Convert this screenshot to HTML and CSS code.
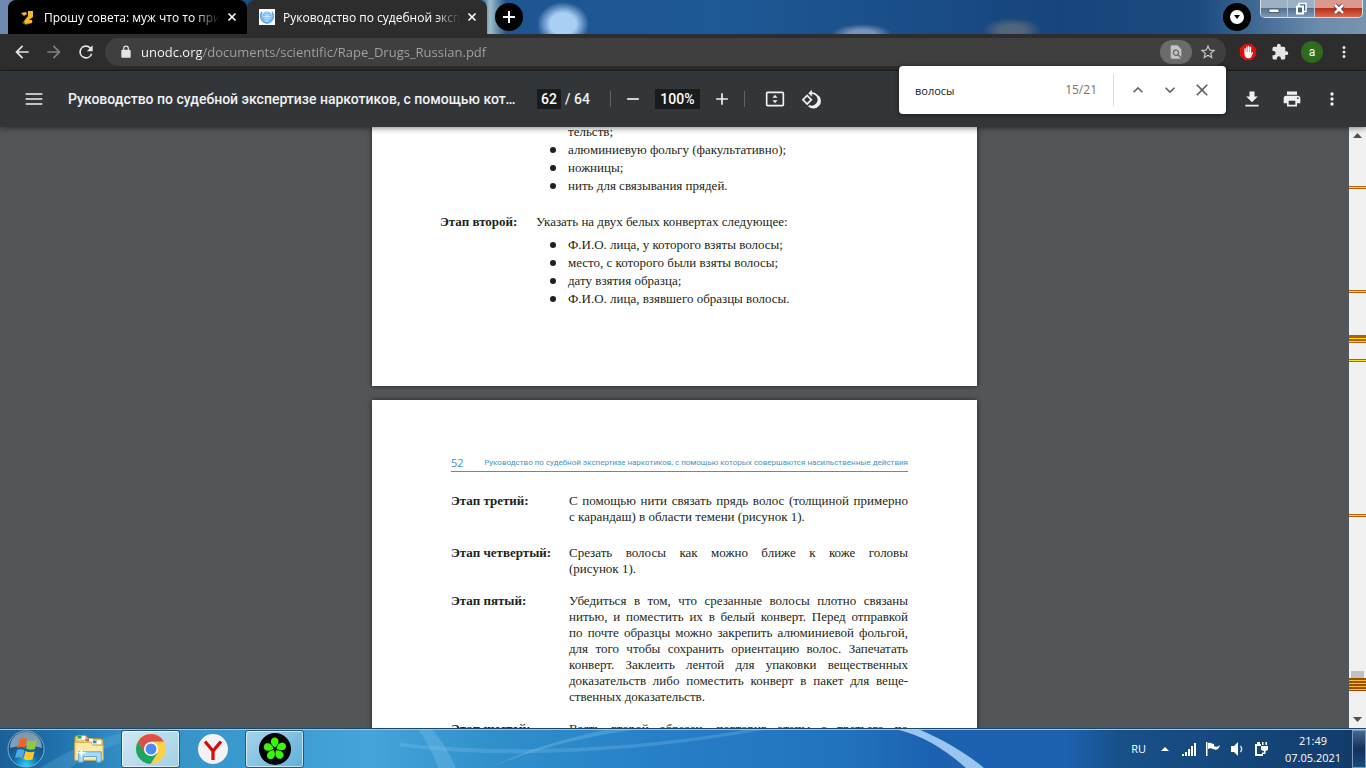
FILE: index.html
```html
<!DOCTYPE html>
<html lang="ru">
<head>
  <meta charset="UTF-8">
  <meta name="viewport" content="width=device-width, initial-scale=1.0">
  <title>Руководство по судебной экспертизе наркотиков</title>
  <link rel="stylesheet" href="styles.css">
</head>
<body>
  <header class="browser">
    <div class="tabstrip">
      <div class="tab">
        <svg class="favicon" viewBox="0 0 16 16"><path d="M3 12l3 2 7-2-1 2-6 2-4-2z" fill="#6d5310"/><path d="M1 4l5-1 1 2-3 2zM8 2h5v6l-4 3h3v3l-7 1-1-3 4-5V4z" fill="#f5b81c"/></svg>
        <span class="tab-title">Прошу совета: муж что то принимает</span>
        <button class="tab-close" aria-label="Закрыть"><svg viewBox="0 0 10 10"><path d="M1.500 1.500l7 7M8.500 1.500l-7 7"/></svg></button>
      </div>
      <div class="tab active">
        <svg class="favicon" viewBox="0 0 16 16"><path d="M0 0h16v16H0z" fill="#fff"/><circle cx="8" cy="7.500" r="5" fill="#7cc0fa"/><path d="M3 3C0 8 3 13 8 14c5-1 8-6 5-11" fill="none" stroke="#5ca9ee" stroke-width="1.800"/><path d="M8 3v9M4 7.500h8M5 5l6 5M11 5l-6 5" stroke="#d8eeff" stroke-width=".7"/></svg>
        <span class="tab-title">Руководство по судебной экспертизе</span>
        <button class="tab-close" aria-label="Закрыть"><svg viewBox="0 0 10 10"><path d="M1.500 1.500l7 7M8.500 1.500l-7 7"/></svg></button>
      </div>
      <button class="round new-tab" aria-label="Новая вкладка"><svg viewBox="0 0 28 28"><path d="M14 8v12M8 14h12" stroke="#fff" stroke-width="2"/></svg></button>
      <button class="round tab-search" aria-label="Поиск вкладок"><svg viewBox="0 0 28 28"><circle cx="14" cy="14" r="7" fill="#fff"/><path d="M11 12h6l-3 4z" fill="#000"/></svg></button>
      <div class="window-buttons">
        <button aria-label="Свернуть"><svg viewBox="0 0 16 16"><path d="M3 8h10v3.500H3z" fill="#fff" stroke="#555d6b"/></svg></button>
        <button aria-label="Восстановить"><svg viewBox="0 0 16 16"><path d="M6 2.500h7v8H6z" fill="#47658c" stroke="#fff" stroke-width="1.500"/><path d="M4 5.500h6v7H4z" fill="#47658c" stroke="#fff" stroke-width="2"/></svg></button>
        <button class="close" aria-label="Закрыть окно"><svg viewBox="0 0 16 16"><path d="M4 4l8 8M12 4l-8 8" stroke="#6b2b26" stroke-width="4.500"/><path d="M4 4l8 8M12 4l-8 8" stroke="#fff" stroke-width="2.600"/></svg></button>
      </div>
    </div>

    <div class="address-row">
      <button class="nav" aria-label="Назад"><svg viewBox="0 0 24 24"><path d="M20 11H7.830l5.590-5.590L12 4l-8 8 8 8 1.410-1.410L7.830 13H20z"/></svg></button>
      <button class="nav dim" aria-label="Вперёд"><svg viewBox="0 0 24 24"><path d="M12 4l-1.410 1.410L16.170 11H4v2h12.170l-5.580 5.590L12 20l8-8z"/></svg></button>
      <button class="nav" aria-label="Обновить"><svg viewBox="0 0 24 24"><path d="M17.650 6.350A8 8 0 1 0 19.730 14h-2.080A6 6 0 1 1 12 6c1.660 0 3.140.69 4.220 1.780L13 11h7V4z"/></svg></button>
      <div class="omnibox">
        <svg class="lock" viewBox="0 0 24 24"><path d="M18 8h-1V6A5 5 0 0 0 7 6v2H6a2 2 0 0 0-2 2v10c0 1.100.9 2 2 2h12a2 2 0 0 0 2-2V10a2 2 0 0 0-2-2zM9 6a3 3 0 0 1 6 0v2H9z"/></svg>
        <input class="url" type="text" aria-label="Адресная строка" value="unodc.org/documents/scientific/Rape_Drugs_Russian.pdf">
        <button class="find-chip" aria-label="Найти на странице"><svg viewBox="0 0 24 24"><path d="M20 19.590V8l-6-6H6a2 2 0 0 0-2 2v16c0 1.100.89 2 1.990 2H18c.45 0 .85-.15 1.190-.4l-4.430-4.430A5 5 0 1 1 16.170 15.750L20 19.590zM9 13a3 3 0 1 0 6 0 3 3 0 0 0-6 0z"/></svg></button>
        <button class="star" aria-label="В закладки"><svg viewBox="0 0 24 24"><path d="M22 9.240l-7.190-.62L12 2 9.190 8.630 2 9.240l5.460 4.730L5.820 21 12 17.270 18.180 21l-1.630-7.030zM12 15.400l-3.760 2.270 1-4.280-3.320-2.880 4.380-.38L12 6.100l1.710 4.040 4.380.38-3.320 2.880 1 4.280z"/></svg></button>
      </div>
      <div class="extensions">
        <button class="nav" aria-label="AdBlock"><svg viewBox="0 0 20 20"><path d="M6 1h8l5 5v8l-5 5H6l-5-5V6z" fill="#e40d0d"/><path d="M6 11V6.500a.8.8 0 0 1 1.600 0V10h.4V4.500a.8.8 0 0 1 1.600 0V10h.4V3.800a.8.8 0 0 1 1.600 0V10h.4V5a.8.8 0 0 1 1.600 0v7l.6-1.300c.5-1 1.600-.7 1.400.2l-1.700 4C13.200 16.300 12 17 10.500 17 7.500 17 6 15 6 11z" fill="#fff"/></svg></button>
        <button class="nav" aria-label="Расширения"><svg viewBox="0 0 24 24"><path d="M20.500 11H19V7a2 2 0 0 0-2-2h-4V3.500a2.500 2.500 0 0 0-5 0V5H4a2 2 0 0 0-2 2v3.800h1.500a2.700 2.700 0 0 1 0 5.400H2V20c0 1.100.9 2 2 2h3.800v-1.500a2.700 2.700 0 0 1 5.400 0V22H17a2 2 0 0 0 2-2v-4h1.500a2.500 2.500 0 0 0 0-5z"/></svg></button>
        <button class="nav" aria-label="Профиль"><span class="avatar">a</span></button>
        <button class="nav" aria-label="Меню"><svg viewBox="0 0 24 24"><path d="M12 8a2 2 0 1 0 0-4 2 2 0 0 0 0 4zm0 2a2 2 0 1 0 0 4 2 2 0 0 0 0-4zm0 6a2 2 0 1 0 0 4 2 2 0 0 0 0-4z"/></svg></button>
      </div>
    </div>

    <form class="find-bar">
      <input type="text" aria-label="Найти" value="волосы">
      <span class="matches">15/21</span>
      <button type="button" aria-label="Предыдущее"><svg viewBox="0 0 24 24"><path d="M12 8l-6 6 1.410 1.410L12 10.830l4.590 4.580L18 14z"/></svg></button>
      <button type="button" aria-label="Следующее"><svg viewBox="0 0 24 24"><path d="M7.410 8.590L12 13.170l4.590-4.580L18 10l-6 6-6-6z"/></svg></button>
      <button type="button" aria-label="Закрыть поиск"><svg viewBox="0 0 24 24"><path d="M19 6.410L17.590 5 12 10.590 6.410 5 5 6.410 10.590 12 5 17.590 6.410 19 12 13.410 17.590 19 19 17.590 13.410 12z"/></svg></button>
    </form>
  </header>

  <div class="pdf-toolbar">
    <button class="tool" aria-label="Меню"><svg viewBox="0 0 24 24"><path d="M2 5h20v2H2zm0 6h20v2H2zm0 6h20v2H2z"/></svg></button>
    <h1>Руководство по судебной экспертизе наркотиков, с помощью которых совершаются насильственные действия</h1>
    <div class="pager">
      <input class="page-no" type="text" aria-label="Страница" value="62">
      <span>/ 64</span>
    </div>
    <div class="zoom">
      <button class="tool" aria-label="Уменьшить"><svg viewBox="0 0 24 24"><path d="M5 11h14v2H5z"/></svg></button>
      <input class="zoom-value" type="text" aria-label="Масштаб" value="100%">
      <button class="tool" aria-label="Увеличить"><svg viewBox="0 0 24 24"><path d="M19 13h-6v6h-2v-6H5v-2h6V5h2v6h6z"/></svg></button>
    </div>
    <button class="tool" aria-label="По размеру страницы"><svg viewBox="0 0 24 24"><path fill-rule="evenodd" d="M3 3h18a2 2 0 0 1 2 2v14a2 2 0 0 1-2 2H3a2 2 0 0 1-2-2V5a2 2 0 0 1 2-2zm0 2v14h18V5zm9 2l3 3.500H9zm0 10l-3-3.500h6z"/></svg></button>
    <button class="tool" aria-label="Повернуть"><svg viewBox="0 0 24 24"><path fill-rule="evenodd" d="M7.340 6.410L.86 12.900l6.490 6.480 6.490-6.480zM3.690 12.900l3.660-3.660L11 12.900l-3.660 3.660zM19.360 6.640A8.950 8.950 0 0 0 13 4V.76L8.760 5 13 9.240V6a7 7 0 1 1-3.010 13.320L8.500 20.810A9 9 0 1 0 19.360 6.640z"/></svg></button>
    <div class="file-tools">
      <button class="tool" aria-label="Скачать"><svg viewBox="0 0 24 24"><path d="M19 9h-4V3H9v6H5l7 7zM4 19v2h16v-2z"/></svg></button>
      <button class="tool" aria-label="Печать"><svg viewBox="0 0 24 24"><path d="M19 8H5a3 3 0 0 0-3 3v6h4v4h12v-4h4v-6a3 3 0 0 0-3-3zm-3 11H8v-5h8zm3-7a1 1 0 1 1 0-2 1 1 0 0 1 0 2zM18 3H6v4h12z"/></svg></button>
      <button class="tool" aria-label="Другие действия"><svg viewBox="0 0 24 24"><path d="M12 8a2 2 0 1 0 0-4 2 2 0 0 0 0 4zm0 2a2 2 0 1 0 0 4 2 2 0 0 0 0-4zm0 6a2 2 0 1 0 0 4 2 2 0 0 0 0-4z"/></svg></button>
    </div>
  </div>

  <main class="viewer">
    <div class="pages">
      <article class="page page-51">
        <ul>
          <li class="cont">тельств;</li>
          <li>алюминиевую фольгу (факультативно);</li>
          <li>ножницы;</li>
          <li>нить для связывания прядей.</li>
        </ul>
        <section class="step">
          <h2>Этап второй:</h2>
          <p>Указать на двух белых конвертах следующее:</p>
        </section>
        <ul>
          <li>Ф.И.О. лица, у которого взяты волосы;</li>
          <li>место, с которого были взяты волосы;</li>
          <li>дату взятия образца;</li>
          <li>Ф.И.О. лица, взявшего образцы волосы.</li>
        </ul>
      </article>

      <article class="page page-52">
        <div class="running-head">
          <span class="folio">52</span>
          <span>Руководство по судебной экспертизе наркотиков, с помощью которых совершаются насильственные действия</span>
        </div>
        <section class="step">
          <h2>Этап третий:</h2>
          <p>
            <span>С помощью нити связать прядь волос (толщиной примерно</span>
            <span>с карандаш) в области темени (рисунок 1).</span>
          </p>
        </section>
        <section class="step">
          <h2>Этап четвертый:</h2>
          <p>
            <span>Срезать волосы как можно ближе к коже головы</span>
            <span>(рисунок 1).</span>
          </p>
        </section>
        <section class="step">
          <h2>Этап пятый:</h2>
          <p>
            <span>Убедиться в том, что срезанные волосы плотно связаны</span>
            <span>нитью, и поместить их в белый конверт. Перед отправкой</span>
            <span>по почте образцы можно закрепить алюминиевой фольгой,</span>
            <span>для того чтобы сохранить ориентацию волос. Запечатать</span>
            <span>конверт. Заклеить лентой для упаковки вещественных</span>
            <span>доказательств либо поместить конверт в пакет для веще-</span>
            <span>ственных доказательств.</span>
          </p>
        </section>
        <section class="step">
          <h2>Этап шестой:</h2>
          <p>
            <span>Взять второй образец, повторив этапы с третьего по</span>
            <span>пятый.</span>
          </p>
        </section>
      </article>
    </div>

    <div class="scrollbar">
      <svg class="arrow" viewBox="0 0 17 17"><path d="M4 11l4.500-5 4.500 5z"/></svg>
      <svg class="arrow" viewBox="0 0 17 17"><path d="M4 6l4.500 5L13 6z"/></svg>
      <i class="thumb"></i>
      <i class="mark m1"></i>
      <i class="mark m2"></i>
      <i class="mark m3"></i>
      <i class="mark m4"></i>
      <i class="mark m5"></i>
      <i class="mark m6"></i>
      <i class="mark m7"></i>
    </div>
  </main>

  <footer class="taskbar">
    <svg class="wallpaper" viewBox="0 0 1366 40" preserveAspectRatio="none">
      <path d="M40 40C70 20 100 8 140 0h30C120 12 90 24 70 40z" fill="#5fb0dc" opacity=".3"/>
      <path d="M418 0h14c10 12 18 26 24 40h-18c-4-14-12-28-20-40z" fill="#8cc8ee" opacity=".3"/>
      <path d="M490 40C530 22 580 8 640 0h-30C560 10 520 24 490 40z" fill="#8cc8ee" opacity=".3"/>
      <path d="M400 18c110 14 240 6 370-18h-20c-120 22-250 26-350 14z" fill="#8cc8ee" opacity=".25"/>
      <path d="M896 0h22c24 10 50 26 66 40h-18C946 22 926 8 896 0z" fill="#a9d0f7" opacity=".9"/>
    </svg>
    <button class="start" aria-label="Пуск"><svg viewBox="0 0 38 38"><defs><radialGradient id="orb" cx=".5" cy=".95" r=".9"><stop offset="0" stop-color="#25d5ff"/><stop offset=".4" stop-color="#116aa5"/><stop offset="1" stop-color="#174066"/></radialGradient></defs><circle cx="19" cy="19" r="18" fill="url(#orb)" stroke="#7db0d0"/><path d="M3 18C3 8 10 2 19 2s16 6 16 16c-10-3-22-3-32 0z" fill="#fff" opacity=".45"/><path d="M13 9c3-1.500 5-1 7 0l-2 9c-3-1.500-5-1-8 0z" fill="#ee6524"/><path d="M21 10c3 1.500 6 1 9 0l-2 9c-3 1-6 1-9-.5z" fill="#93c640"/><path d="M10 20c3-1 5-1 7.500.5l-2 8C13 27 10.500 27 8 28z" fill="#4fa7e4"/><path d="M18.500 21c3 1.500 6 1.500 9 .5l-2 8c-3 1-6 1-9-.5z" fill="#ffca28"/></svg></button>
    <button class="task" aria-label="Проводник"><svg viewBox="0 0 34 34"><path d="M2 4l2-1h10l2 3h14l2 2v20H2z" fill="#e9c96f" stroke="#b18a33"/><path d="M5 3h8v4H5z" fill="#fff"/><path d="M5 3h4v3H5z" fill="#2cab3c"/><path d="M12 6h9v3h-9z" fill="#fff"/><path d="M13 6h4v3h-4z" fill="#dd6a2d"/><path d="M20 8h10v4H20z" fill="#fff"/><path d="M21 8h4v3h-4z" fill="#2b8edb"/><path d="M2 10h17l2 3h11v16H2z" fill="#fbe9a9" stroke="#d2ac51"/><path d="M6 20h24v11h-5v-6H11v6H6z" fill="#a5dbf5" stroke="#5aa5cf"/><path d="M9 15l1 5 5 1-5 1-1 5-1-5-5-1 5-1z" fill="#fff"/></svg></button>
    <button class="task open front" aria-label="Google Chrome"><svg viewBox="0 0 32 32"><circle cx="16" cy="16" r="15" fill="#fdd04b"/><path d="M3 8.500A15 15 0 0 1 29 8.500H16L9.500 20z" fill="#dd5144"/><path d="M3 8.500A15 15 0 0 0 15.500 31l7-11-6.500 3-6.500-3.500z" fill="#1da362"/><circle cx="16" cy="16" r="7" fill="#fff"/><circle cx="16" cy="16" r="5.500" fill="#4c8bf5"/></svg></button>
    <button class="task" aria-label="Яндекс.Браузер"><svg viewBox="0 0 32 32"><circle cx="16" cy="16" r="15" fill="#f3f3f3"/><path d="M8 8.500l8 9.500 8-9.500M16 17v10" fill="none" stroke="#d7090f" stroke-width="3.200"/></svg></button>
    <button class="task open" aria-label="ICQ"><svg viewBox="0 0 32 32"><circle cx="16" cy="16" r="16" fill="#000"/><g fill="#3df506"><path id="petal" d="M16 14.500c-3-2-4.500-4-4-7 .8-3.500 5.500-4 7-1 1.400 3.500-.5 6-3 8z"/><use href="#petal" transform="rotate(72 16 16)"/><use href="#petal" transform="rotate(144 16 16)"/><use href="#petal" transform="rotate(216 16 16)"/><use href="#petal" transform="rotate(288 16 16)"/></g></svg></button>

    <div class="tray">
      <span class="lang">RU</span>
      <svg viewBox="0 0 16 16"><path d="M4 10l4-4 4 4z"/></svg>
      <svg viewBox="0 0 16 16"><path d="M1 13h2v2H1zM4 11h2v4H4zM7 8h2v7H7zM10 5h2v10h-2zM13 2h2v13h-2z"/></svg>
      <svg viewBox="0 0 16 16"><path d="M1 1h1.500v14H1zM3 2c3-1 4 1 6 1v2c2 1 4 1 6-1-1 4-3 6-7 4-2-1-3-1-5 0z"/></svg>
      <svg viewBox="0 0 16 16"><path d="M2 5h3l4-4v14l-4-4H2z"/><path d="M11.500 5c1.500 2 1.500 4 0 6" fill="none" stroke="#cfe0f0" stroke-width="1.400"/></svg>
      <svg viewBox="0 0 16 16"><path d="M2 3h6v2H4v8h6v2H2zM4 1h3v2H4zM9 1h1.500v3H9zM12.500 1H14v3h-1.500zM8 5h7v3c0 1-1 2-2.500 2v3H9v-1.500h2V10C9 10 8 9 8 8z"/></svg>
      <time class="clock"><span>21:49</span><span>07.05.2021</span></time>
      <button class="show-desktop" aria-label="Свернуть все окна"></button>
    </div>
  </footer>
</body>
</html>
```

FILE: styles.css
```css
:root {
  --frame: #2d2d2d;
  --field: #3f3f3f;
  --pdf-bar: #323639;
  --pdf-bg: #525659;
  --icon: #f1f1f1;
  --ink: #231f20;
  --accent: #4795c4;
  --ui-font: "Open Sans", "Noto Sans", sans-serif;
}

* {
  box-sizing: border-box;
}

body {
  margin: 0;
  height: 100vh;
  display: flex;
  flex-direction: column;
  overflow: hidden;
  font-family: var(--ui-font);
  font-size: 11px;
}

button {
  display: flex;
  align-items: center;
  justify-content: center;
  flex: none;
  padding: 0;
  border: none;
  background: none;
}

input {
  border: none;
  padding: 0;
  font-family: inherit;
  min-width: 0;
}

svg {
  display: block;
  flex: none;
}

/* tabs */
.browser {
  position: relative;
  background: var(--frame);
  border-bottom: 1px solid #1f1f1f;
}

.tabstrip {
  display: flex;
  height: 34px;
  padding: 0 3px 0 8px;
  background:
    radial-gradient(ellipse 26px 22px at 563px 24px, #a9cff5 50%, transparent 100%),
    radial-gradient(ellipse 30px 10px at 862px 34px, #7795b8 40%, transparent 100%),
    radial-gradient(ellipse 30px 12px at 1012px 30px, #53657c 40%, transparent 100%),
    linear-gradient(90deg, #7089b0 0, #7089b0 8px, #1c4f8a 240px, #1c4f8a 480px, #9fbfc8 490px, #1e5592 506px, #1e5995 720px, #17447c 1060px, #1b4a80 1200px, #6c8cab 1320px, #7893ad 100%);
}

.tab {
  display: flex;
  align-items: center;
  width: 239px;
  padding: 0 7px 0 12px;
  border-radius: 8px 8px 0 0;
  background: #000;
  color: #fff;
  font-size: 12px;
}

.tab.active {
  width: 240px;
  background: var(--frame);
}

.favicon {
  width: 16px;
  height: 16px;
}

.tab-title {
  flex: 1;
  margin: 0 4px 0 8px;
  overflow: hidden;
  white-space: nowrap;
  font-size: 12px;
  -webkit-mask-image: linear-gradient(90deg, #000 85%, transparent);
  mask-image: linear-gradient(90deg, #000 85%, transparent);
}

.tab-close {
  width: 16px;
  height: 16px;
}

.tab-close svg {
  width: 10px;
  height: 10px;
  stroke: #fff;
  stroke-width: 1.6;
}

.round {
  width: 28px;
  height: 28px;
  margin-top: 3px;
  border-radius: 50%;
  background: #000;
}

.round svg {
  width: 28px;
  height: 28px;
}

.new-tab {
  margin-left: 8px;
}

.tab-search {
  margin-left: auto;
}

.window-buttons {
  display: flex;
  height: 18px;
  margin-left: 9px;
  border: 1px solid #d5dfe9;
  border-top: none;
  border-radius: 0 0 5px 5px;
  overflow: hidden;
}

.window-buttons button {
  width: 27px;
  border-right: 1px solid #b9c6d4;
  background: linear-gradient(#9db0c5 45%, #56708f 50%, #7f98b4);
}

.window-buttons .close {
  width: 47px;
  border-right: none;
  background: linear-gradient(#d99a8d 45%, #b8301a 50%, #d86a50);
}

.window-buttons svg {
  width: 16px;
  height: 16px;
}

/* address row */
.address-row {
  display: flex;
  align-items: center;
  height: 36px;
  padding: 0 6px;
}

.nav {
  width: 32px;
  height: 28px;
}

.nav svg {
  width: 20px;
  height: 20px;
  fill: #e6e6e6;
}

.nav.dim svg {
  fill: #808080;
}

.omnibox {
  display: flex;
  align-items: center;
  flex: 1;
  height: 28px;
  margin: 0 6px 0 3px;
  padding: 0 2px 0 14px;
  border-radius: 14px;
  background: var(--field);
}

.lock {
  width: 14px;
  height: 14px;
  fill: #e6e6e6;
}

.url {
  flex: 1;
  margin: 0 8px;
  font-size: 13px;
  color: transparent;
  /* host is white, the rest of the address is grey */
  background: linear-gradient(90deg, #fff 61px, #a3a3a3 61px);
  -webkit-background-clip: text;
  background-clip: text;
}

.find-chip {
  width: 32px;
  height: 24px;
  border-radius: 12px;
  background: #6b6b6b;
}

.find-chip svg {
  width: 16px;
  height: 16px;
  fill: #c4c4c4;
}

.star {
  width: 32px;
  height: 24px;
}

.star svg {
  width: 18px;
  height: 18px;
  fill: #c4c4c4;
}

.extensions {
  display: flex;
}

.extensions svg {
  width: 18px;
  height: 18px;
}

.avatar {
  width: 22px;
  border-radius: 50%;
  background: #2f6b1f;
  color: #fff;
  font-family: Roboto, sans-serif;
  font-size: 12px;
  line-height: 22px;
  text-align: center;
}

.find-bar {
  position: absolute;
  z-index: 2;
  top: 66px;
  right: 140px;
  display: flex;
  align-items: center;
  width: 327px;
  height: 48px;
  padding: 0 8px 0 16px;
  border-radius: 4px;
  background: #fff;
  box-shadow: 0 1px 5px rgba(0, 0, 0, 0.5);
}

.find-bar input {
  flex: 1;
  font-size: 11px;
  color: #202124;
}

.matches {
  margin-right: 8px;
  padding-right: 16px;
  border-right: 1px solid #dadce0;
  font-size: 12px;
  line-height: 32px;
  color: #80756c;
}

.find-bar button {
  width: 32px;
  height: 32px;
}

.find-bar svg {
  width: 20px;
  height: 20px;
  fill: #5f6368;
}

/* pdf toolbar */
.pdf-toolbar {
  position: relative;
  z-index: 1;
  display: flex;
  align-items: center;
  flex: none;
  height: 56px;
  padding: 0 16px;
  background: var(--pdf-bar);
  box-shadow: 0 1px 6px rgba(0, 0, 0, 0.5);
  color: var(--icon);
  font-family: Roboto, sans-serif;
  font-size: 14px;
  font-weight: 500;
}

.pdf-toolbar h1 {
  width: 452px;
  margin: 0 17px 0 16px;
  overflow: hidden;
  white-space: nowrap;
  text-overflow: ellipsis;
  font-size: 14px;
  font-weight: 500;
}

.tool {
  width: 36px;
  height: 36px;
}

.tool svg {
  width: 20px;
  height: 20px;
  fill: var(--icon);
}

.pager {
  display: flex;
  align-items: center;
  gap: 4px;
}

.pdf-toolbar input {
  height: 20px;
  background: #191b1c;
  color: #fff;
  font-size: 14px;
  font-weight: 500;
  text-align: center;
}

.page-no {
  width: 24px;
}

.zoom {
  display: flex;
  align-items: center;
  gap: 4px;
  height: 16px;
  margin: 0 12px 0 20px;
  padding: 0 4px;
  border: solid #5f6366;
  border-width: 0 1px;
}

.zoom-value {
  width: 45px;
}

.file-tools {
  display: flex;
  gap: 4px;
  margin-left: auto;
}

/* document */
.viewer {
  display: flex;
  flex: 1;
  min-height: 0;
  background: var(--pdf-bg);
}

.pages {
  display: flex;
  flex-direction: column;
  align-items: center;
  gap: 14px;
  flex: 1;
  overflow: hidden;
}

.page {
  flex: none;
  width: 605px;
  background: #fff;
  box-shadow: 0 0 5px rgba(0, 0, 0, 0.6);
  color: var(--ink);
  font-family: "Liberation Serif", serif;
  font-size: 13px;
}

.page-51 {
  margin-top: -4px;
  padding: 0 68px 78px;
  line-height: 18px;
}

.page ul {
  margin: 0;
  padding-left: 128px;
  list-style: none;
}

.page li::before {
  content: "";
  float: left;
  width: 6px;
  height: 6px;
  margin: 6px 0 0 -18px;
  border-radius: 50%;
  background: var(--ink);
}

.page li.cont::before {
  display: none;
}

.step {
  display: grid;
  grid-template-columns: 96px 1fr;
}

.step h2,
.step p {
  margin: 0;
  font-size: 13px;
}

.page-51 .step {
  margin: 18px 0 5px;
}

.page-52 {
  padding: 54px 69px 60px 79px;
  line-height: 16px;
}

.page-52 .step {
  grid-template-columns: 118px 1fr;
  margin-top: 16px;
}

.page-52 .step:nth-of-type(2) {
  margin-top: 20px;
}

/* every line but the last of a paragraph fills the column */
.page-52 .step span {
  display: block;
  white-space: nowrap;
  text-align-last: justify;
}

.page-52 .step span:last-child {
  text-align-last: left;
}

.running-head {
  display: flex;
  justify-content: space-between;
  align-items: center;
  margin-bottom: 21px;
  border-bottom: 1px solid var(--accent);
  color: var(--accent);
  font-family: Roboto, sans-serif;
  font-size: 8px;
  line-height: 17px;
  white-space: nowrap;
}

.folio {
  font-family: var(--ui-font);
  font-size: 11px;
}

/* scrollbar with search hits */
.scrollbar {
  position: relative;
  display: flex;
  flex-direction: column;
  justify-content: space-between;
  width: 17px;
  background: #f1f1f1;
}

.arrow {
  width: 17px;
  height: 17px;
  fill: #505050;
}

.thumb {
  position: absolute;
  top: 544px;
  left: 2px;
  width: 13px;
  height: 17px;
  background: #c1c1c1;
}

.mark {
  position: absolute;
  left: 0;
  width: 100%;
  height: 3px;
  border: solid #b45f06;
  border-width: 1px 0;
  background: #ffe600;
}

.m1 { top: 59px; }
.m2 { top: 163px; }
.m3 { top: 208px; height: 5px; border-top-width: 3px; }
.m4 { top: 213px; }
.m5 { top: 232px; }
.m6 { top: 387px; }

.m7 {
  top: 551px;
  height: 13px;
  border: none;
  background: repeating-linear-gradient(#9a4b00 0, #9a4b00 2px, #ffc400 2px, #ffc400 3px);
}

/* taskbar */
.taskbar {
  position: relative;
  z-index: 1;
  display: flex;
  align-items: center;
  flex: none;
  height: 40px;
  padding-left: 7px;
  border-top: 1px solid #1c4668;
  box-shadow: inset 0 1px #9cc6e4;
  background: linear-gradient(90deg, #1b5f98 0, #1f70ab 4%, #338fc5 9%, #3c9ccf 20%, #45a4d9 27%, #3090cb 36%, #2780c7 48%, #2272bd 62%, #1c62b2 68%, #1c62b0 78%, #185088 82%, #164a80 88%, #123a68 100%);
  color: #fff;
}

.wallpaper {
  position: absolute;
  inset: 0;
  width: 100%;
  height: 100%;
}

.start,
.task,
.tray {
  position: relative;
}

.start svg {
  width: 38px;
  height: 38px;
}

.start {
  margin-right: 14px;
}

.task {
  width: 59px;
  height: 38px;
  margin-right: 3px;
  border-radius: 3px;
}

.task svg {
  width: 32px;
  height: 32px;
}

.task.open {
  border: 1px solid #23577c;
  background: linear-gradient(135deg, #a9d3ea, #5fb0db);
  box-shadow: inset 0 0 0 1px rgba(255, 255, 255, 0.6);
}

.task.front {
  background: linear-gradient(135deg, #d3e8f2, #9fd0e8);
}

.tray {
  display: flex;
  align-items: center;
  gap: 8px;
  height: 100%;
  margin-left: auto;
}

.tray svg {
  width: 16px;
  height: 16px;
  fill: #fff;
}

.lang {
  margin-right: 3px;
}

.clock {
  display: flex;
  flex-direction: column;
  width: 66px;
  margin-left: 1px;
  padding-left: 4px;
  line-height: 17px;
  text-align: center;
}

.show-desktop {
  width: 14px;
  height: 38px;
  border: 1px solid #7b9abb;
  background: linear-gradient(#45688f, #12305a 50%, #1c4a7c);
}
```
